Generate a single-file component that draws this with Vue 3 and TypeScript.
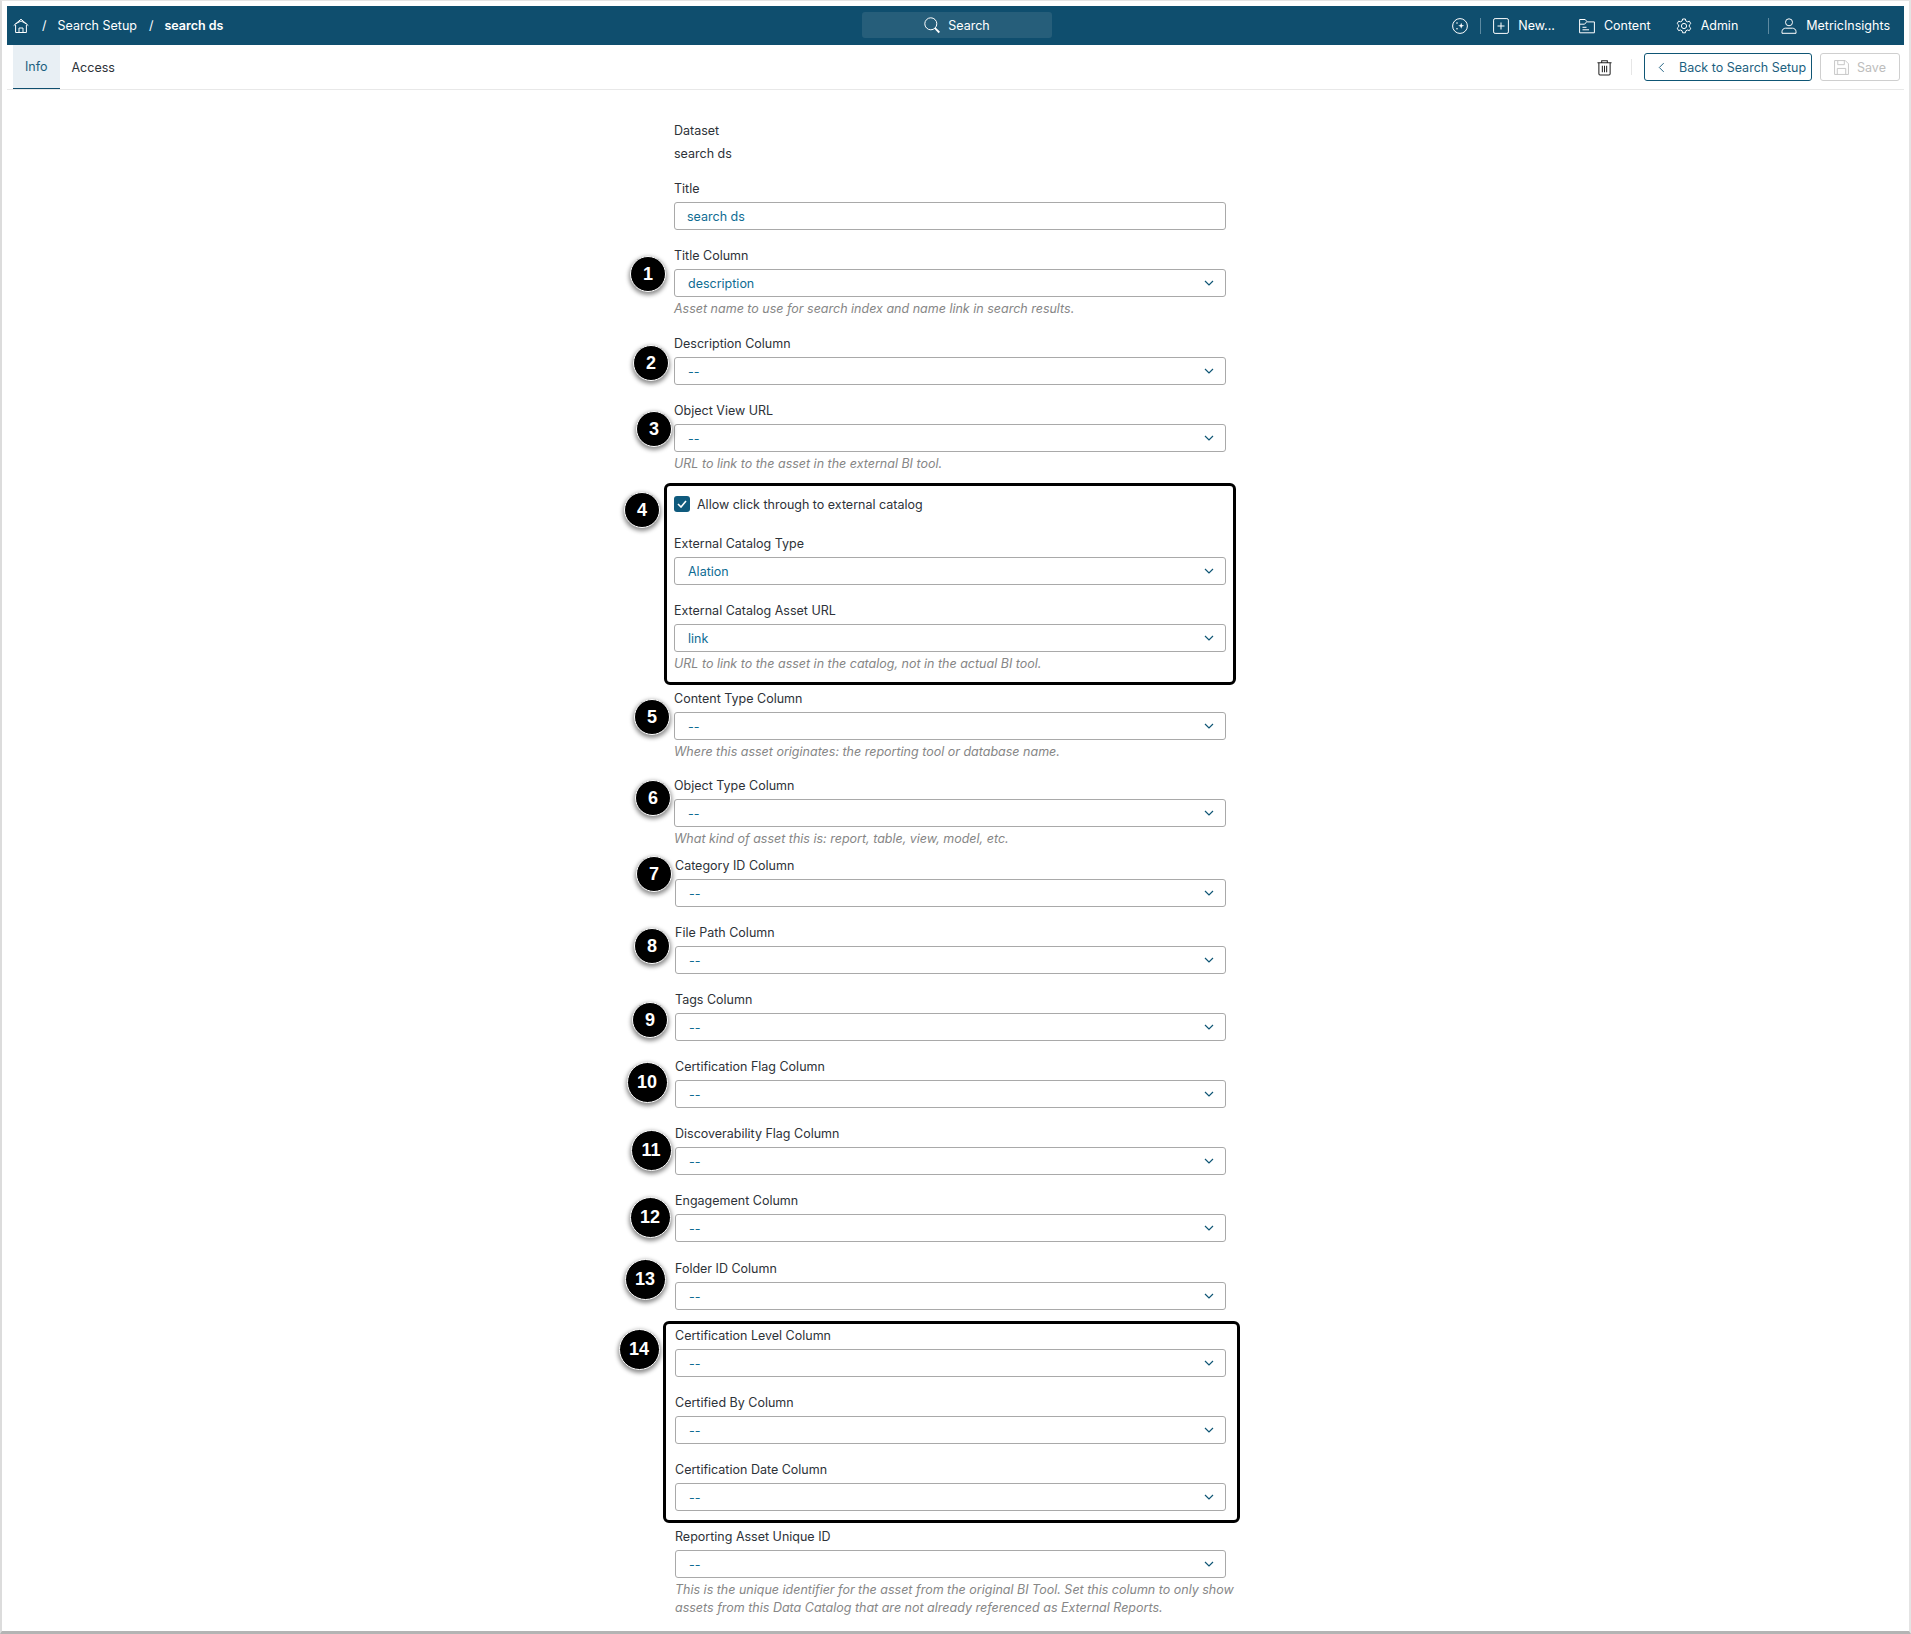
<script setup lang="ts">
interface Field {
  label: string
  value: string
  hint?: string[]
  cls?: string
}
const before: Field[] = [
  { label: 'Title Column', value: 'description', hint: ['Asset name to use for search index and name link in search results.'] },
  { label: 'Description Column', value: '--' },
  { label: 'Object View URL', value: '--', hint: ['URL to link to the asset in the external BI tool.'], cls: 'gap-lg' },
]
const catalog: Field[] = [
  { label: 'External Catalog Type', value: 'Alation' },
  { label: 'External Catalog Asset URL', value: 'link', hint: ['URL to link to the asset in the catalog, not in the actual BI tool.'] },
  { label: 'Content Type Column', value: '--', hint: ['Where this asset originates: the reporting tool or database name.'], cls: 'gap-md' },
  { label: 'Object Type Column', value: '--', hint: ['What kind of asset this is: report, table, view, model, etc.'], cls: 'gap-sm' },
]
const after: Field[] = [
  { label: 'Category ID Column', value: '--' },
  { label: 'File Path Column', value: '--' },
  { label: 'Tags Column', value: '--' },
  { label: 'Certification Flag Column', value: '--' },
  { label: 'Discoverability Flag Column', value: '--' },
  { label: 'Engagement Column', value: '--', cls: 'gap-xl' },
  { label: 'Folder ID Column', value: '--' },
  { label: 'Certification Level Column', value: '--' },
  { label: 'Certified By Column', value: '--' },
  { label: 'Certification Date Column', value: '--' },
  { label: 'Reporting Asset Unique ID', value: '--', hint: ['This is the unique identifier for the asset from the original BI Tool. Set this column to only show', 'assets from this Data Catalog that are not already referenced as External Reports.'] },
]
const badges = [
  { n: 1, x: 648, y: 274, d: 36 },
  { n: 2, x: 651, y: 363, d: 36 },
  { n: 3, x: 654, y: 429, d: 36 },
  { n: 4, x: 642, y: 510, d: 36 },
  { n: 5, x: 652, y: 717, d: 36 },
  { n: 6, x: 653, y: 798, d: 36 },
  { n: 7, x: 654, y: 874, d: 36 },
  { n: 8, x: 652, y: 946, d: 36 },
  { n: 9, x: 650, y: 1020, d: 36 },
  { n: 10, x: 647, y: 1082, d: 41 },
  { n: 11, x: 651, y: 1150, d: 41 },
  { n: 12, x: 650, y: 1217, d: 41 },
  { n: 13, x: 645, y: 1279, d: 41 },
  { n: 14, x: 639, y: 1349, d: 41 },
]
const boxes = [
  { x: 664, y: 483, w: 572, h: 202 },
  { x: 663, y: 1321, w: 577, h: 202 },
]
</script>

<template>
  <div class="page">
    <header class="topbar">
      <nav class="crumbs">
        <svg class="ico home" viewBox="0 0 16 16"><path d="M.7 7.6 8 1.2l7.3 6.4M2.4 5.9 8 3l5.6 2.9M2.6 7v7.5h10.8V7M6 14.5V10h4v4.500" /></svg>
        <span class="sep">/</span>
        <span>Search Setup</span>
        <span class="sep">/</span>
        <strong>search ds</strong>
      </nav>
      <div class="search">
        <svg class="ico" viewBox="0 0 16 16"><circle cx="6.800" cy="6.800" r="6" /><path d="m11 11.200 4.300 4.300" stroke-width="1.800" /></svg>
        <span>Search</span>
      </div>
      <div class="nav">
        <svg class="ico" viewBox="0 0 16 16"><circle cx="8" cy="8" r="7.400" /><path class="fill" d="M9.200 4.800 10 7l2.200.8L10 8.600 9.200 10.800 8.400 8.600 6.200 7.800 8.400 7z" /><circle class="fill" cx="5" cy="5" r=".8" /><circle class="fill" cx="5" cy="10.800" r=".8" /></svg>
        <i class="divider first"></i>
        <svg class="ico" viewBox="0 0 16 16"><rect x=".6" y=".6" width="14.800" height="14.800" rx="1.500" /><path d="M8 4.500v7M4.500 8h7" /></svg>
        <span class="nav-text new">New...</span>
        <svg class="ico" viewBox="0 0 16 16"><path d="M.6 14.800V1.500h5.600l2 2.400h7.200v10.900zM.6 6.200h5l2-2.300M3.500 9.300h4M3.500 11.800h6.500" /></svg>
        <span class="nav-text content">Content</span>
        <svg class="ico" viewBox="0 0 16 16"><circle cx="8" cy="8" r="2.600" /><path d="M6.600 1h2.800l.5 2 1.500.8 2-.6 1.400 2.400-1.500 1.400v1.800l1.500 1.400-1.400 2.400-2-.6-1.500.8-.5 2H6.600l-.5-2-1.500-.8-2 .6L1.200 10.200l1.500-1.400V7L1.200 5.600l1.400-2.400 2 .6 1.500-.8z" /></svg>
        <span class="nav-text admin">Admin</span>
        <i class="divider"></i>
        <svg class="ico" viewBox="0 0 16 16"><circle cx="8" cy="4.300" r="3.500" /><path d="M1 15.300v-1.800c0-2 1.800-3.300 3.500-3.300h7c1.700 0 3.500 1.300 3.500 3.300v1.800z" /></svg>
        <span class="nav-text user">MetricInsights</span>
      </div>
    </header>

    <div class="tabs">
      <span class="tab active">Info</span>
      <span class="tab">Access</span>
      <div class="actions">
        <svg class="trash" viewBox="0 0 16 17"><path d="M.5 3.500h15M5 3.500V1.200h6v2.300M2 3.500v11.700c0 .7.500 1.200 1.200 1.200h9.600c.7 0 1.200-.5 1.200-1.200V3.500M5.700 6.500v7M8 6.500v7M10.300 6.500v7" /></svg>
        <i class="act-divider"></i>
        <button class="btn back" type="button">
          <svg class="chev-left" viewBox="0 0 8 12"><path d="M6.500 1 1.500 6l5 5" /></svg>
          <span>Back to Search Setup</span>
        </button>
        <button class="btn save" type="button">
          <svg class="save-ico" viewBox="0 0 16 16"><path d="M.6.600h11.400l3.400 3.400v11.400H.6zM4 .600v4.400h7V.600M3.500 15.400V9h9v6.400" /></svg>
          <span>Save</span>
        </button>
      </div>
    </div>

    <main class="form">
      <div class="static">
        <div class="label">Dataset</div>
        <div class="static-value">search ds</div>
      </div>
      <div class="field">
        <div class="label">Title</div>
        <div class="control"><span class="input-val">search ds</span></div>
      </div>
      <div v-for="f in before" :key="f.label" class="field" :class="f.cls">
        <div class="label">{{ f.label }}</div>
        <div class="control select">
          <span>{{ f.value }}</span>
          <svg class="chev" viewBox="0 0 10 6"><path d="M1 1l4 4 4-4" /></svg>
        </div>
        <div v-for="h in f.hint" :key="h" class="hint">{{ h }}</div>
      </div>
      <div class="check-row">
        <span class="check"><svg viewBox="0 0 10 8"><path d="M1 4l3 3 5-6" /></svg></span>
        <span>Allow click through to external catalog</span>
      </div>
      <div v-for="f in catalog" :key="f.label" class="field" :class="f.cls">
        <div class="label">{{ f.label }}</div>
        <div class="control select">
          <span>{{ f.value }}</span>
          <svg class="chev" viewBox="0 0 10 6"><path d="M1 1l4 4 4-4" /></svg>
        </div>
        <div v-for="h in f.hint" :key="h" class="hint">{{ h }}</div>
      </div>
      <div class="shifted">
        <div v-for="f in after" :key="f.label" class="field" :class="f.cls">
          <div class="label">{{ f.label }}</div>
          <div class="control select">
            <span>{{ f.value }}</span>
            <svg class="chev" viewBox="0 0 10 6"><path d="M1 1l4 4 4-4" /></svg>
          </div>
          <div v-for="h in f.hint" :key="h" class="hint">{{ h }}</div>
        </div>
      </div>
    </main>

    <div
      v-for="b in boxes"
      :key="b.y"
      class="callout"
      :style="{ left: b.x + 'px', top: b.y + 'px', width: b.w + 'px', height: b.h + 'px' }"
    ></div>
    <div
      v-for="b in badges"
      :key="b.n"
      class="badge"
      :style="{ left: b.x - b.d / 2 + 'px', top: b.y - b.d / 2 + 'px', width: b.d + 'px', height: b.d + 'px' }"
    >{{ b.n }}</div>
  </div>
</template>

<style scoped>
.page {
  position: relative;
  box-sizing: border-box;
  width: 1911px;
  height: 1634px;
  padding: 6px 7px 0;
  overflow: hidden;
  background: #fff;
  font-family: Inter, "Liberation Sans", sans-serif;
  font-size: 12.500px;
  color: #2d3238;
  border-top: 1px solid #e4e4e4;
  border-left: 2px solid #dcdcdc;
  border-right: 2px solid #e4e4e4;
  border-bottom: 3px solid #b4b4b4;
  padding-left: 5px;
  padding-right: 5px;
  padding-top: 5px;
}
.ico {
  width: 16px;
  height: 16px;
  fill: none;
  stroke: #fff;
  stroke-width: 1;
  flex: none;
  overflow: visible;
}
.ico .fill { fill: #fff; stroke: none; }
.topbar {
  position: relative;
  display: flex;
  align-items: center;
  height: 39px;
  padding: 0 14px 0 6px;
  background: #0f4e6e;
  color: #fff;
}
.crumbs {
  display: flex;
  align-items: center;
  gap: 11px;
  font-size: 12.500px;
}
.crumbs strong { font-weight: 600; }
.sep { margin: 0 0 0 1px; }
.home { margin-right: 1px; }
.search {
  position: absolute;
  left: 855px;
  top: 6px;
  box-sizing: border-box;
  width: 190px;
  height: 26px;
  display: flex;
  align-items: center;
  justify-content: center;
  gap: 8px;
  background: #265e7a;
  border-radius: 3px;
}
.nav {
  margin-left: auto;
  display: flex;
  align-items: center;
}
.nav-text { margin-left: 9px; }
.new { margin-right: 24px; }
.content { margin-right: 25px; }
.admin { margin-right: 17px; }
.user { margin-left: 9px; }
.divider {
  width: 1px;
  height: 16px;
  margin: 0 12px 0 13px;
  background: #5d8aa1;
}
.divider.first { margin: 0 12px; }
.tabs {
  display: flex;
  align-items: stretch;
  height: 45px;
  margin-right: 0;
  border-bottom: 1px solid #e8e8e8;
  box-sizing: border-box;
  padding-left: 6px;
}
.tab {
  display: flex;
  align-items: center;
  padding: 0 12px;
  color: #2d3238;
}
.tab.active {
  background: #e8eff4;
  color: #1d5f80;
  border-bottom: 1px solid #0f4e6e;
}
.actions {
  margin-left: auto;
  display: flex;
  align-items: center;
  padding-right: 4px;
}
.trash {
  width: 15px;
  height: 17px;
  fill: none;
  stroke: #222;
  stroke-width: 1.100;
}
.act-divider {
  width: 1px;
  height: 16px;
  margin: 0 12px 0 19px;
  background: #e6e6e6;
}
.btn {
  box-sizing: border-box;
  height: 28px;
  display: flex;
  align-items: center;
  background: #fff;
  border-radius: 3px;
  font: inherit;
  padding: 0;
}
.back {
  width: 168px;
  border: 1px solid #0f5675;
  color: #1d5f80;
  padding-left: 13px;
  gap: 14px;
}
.chev-left {
  width: 7px;
  height: 11px;
  fill: none;
  stroke: #1d5f80;
  stroke-width: 1.100;
}
.save {
  width: 80px;
  margin-left: 8px;
  border: 1px solid #cfcfcf;
  color: #bdbdbd;
  padding-left: 13px;
  gap: 8px;
}
.save-ico {
  width: 15px;
  height: 15px;
  fill: none;
  stroke: #c4c4c4;
  stroke-width: 1;
}
.form {
  width: 552px;
  margin-left: 667px;
  padding-top: 31px;
}
.static { margin-bottom: 15px; }
.static-value { margin-top: 2px; line-height: 20px; }
.label { height: 20px; line-height: 20px; margin-bottom: 3px; }
.field { margin-bottom: 16px; }
.gap-lg { margin-bottom: 21px; }
.gap-md { margin-bottom: 15px; }
.gap-sm { margin-bottom: 8px; }
.gap-xl { margin-bottom: 17px; }
.control {
  box-sizing: border-box;
  height: 28px;
  display: flex;
  align-items: center;
  padding: 0 12px;
  border: 1px solid #a9a9a9;
  border-radius: 3px;
  color: #0f6c93;
}
.input-val { margin-left: 0; }
.select { justify-content: space-between; padding-right: 11px; padding-left: 13px; }
.chev {
  width: 10px;
  height: 6px;
  fill: none;
  stroke: #0f5675;
  stroke-width: 1.200;
}
.hint {
  margin-top: 3px;
  line-height: 18px;
  font-style: italic;
  color: #868686;
  white-space: nowrap;
}
.hint + .hint { margin-top: 0; }
.check-row {
  display: flex;
  align-items: center;
  gap: 7px;
  height: 20px;
  margin-bottom: 20px;
}
.check {
  width: 16px;
  height: 16px;
  border-radius: 3px;
  background: #0f5a7d;
  display: flex;
  align-items: center;
  justify-content: center;
}
.check svg {
  width: 10px;
  height: 8px;
  fill: none;
  stroke: #fff;
  stroke-width: 1.600;
}
.shifted { margin-left: 1px; }
.callout {
  position: absolute;
  box-sizing: border-box;
  border: 3px solid #000;
  border-radius: 6px;
  margin-left: -2px;
  margin-top: -1px;
  pointer-events: none;
}
.badge {
  position: absolute;
  box-sizing: border-box;
  margin-left: -2px;
  margin-top: -1px;
  display: flex;
  align-items: center;
  justify-content: center;
  background: #000;
  border: 1px solid #fff;
  border-radius: 50%;
  color: #fff;
  font-family: "Liberation Sans", Arial, sans-serif;
  font-size: 18px;
  font-weight: 700;
  box-shadow: 0 2px 4px 1px rgba(0, 0, 0, 0.45);
}
</style>

<style>
html, body { margin: 0; padding: 0; background: #fff; }
</style>
